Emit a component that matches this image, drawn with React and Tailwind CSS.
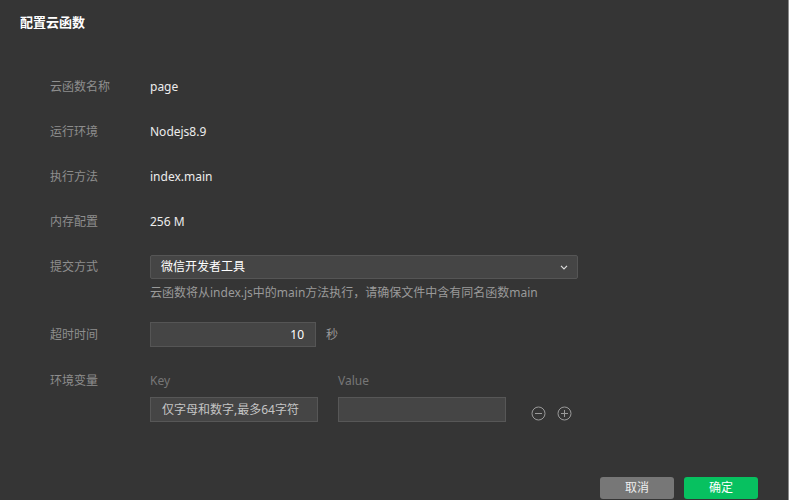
const font = "font-['Noto_Sans','Noto_Sans_CJK_SC',sans-serif]";

const Row = ({ label, children, className = "" }) => (
  <div className={`flex items-center ${className}`}>
    <div className="w-[150px] pl-[50px] text-[12px] text-[#8e8e8e] shrink-0">{label}</div>
    {children}
  </div>
);

const CircleIcon = ({ plus }) => (
  <svg width="15" height="15" viewBox="0 0 15 15" fill="none" stroke="#9a9a9a" strokeWidth="1">
    <circle cx="7.5" cy="7.5" r="6.5" />
    <line x1="4" y1="7.5" x2="11" y2="7.5" />
    {plus && <line x1="7.5" y1="4" x2="7.5" y2="11" />}
  </svg>
);

export default function App() {
  return (
    <div className={`w-[789px] h-[500px] bg-[#353535] border-r border-[#8a8a8a] flex flex-col ${font}`}>
      <div className="pl-[20px] pt-[13px] text-[13px] font-bold text-white leading-[18px]">配置云函数</div>

      <div className="mt-[44px] flex flex-col">
        {[
          ["云函数名称", "page"],
          ["运行环境", "Nodejs8.9"],
          ["执行方法", "index.main"],
          ["内存配置", "256 M"],
        ].map(([l, v]) => (
          <Row key={l} label={l} className="h-[24px] mb-[21px]">
            <span className="text-[12px] text-[#ececec]">{v}</span>
          </Row>
        ))}

        <Row label="提交方式" className="h-[24px]">
          <div className="w-[428px] h-[24px] bg-[#454545] border border-[#555] rounded-[2px] flex items-center justify-between pl-[10px] pr-[9px]">
            <span className="text-[12px] text-white">微信开发者工具</span>
            <svg width="8" height="5" viewBox="0 0 8 5" fill="none" stroke="#ddd" strokeWidth="1.2">
              <polyline points="1,0.8 4,3.8 7,0.8" />
            </svg>
          </div>
        </Row>
        <div className="pl-[150px] mt-[6px] text-[12px] text-[#9a9a9a] leading-[16px]">
          云函数将从index.js中的main方法执行，请确保文件中含有同名函数main
        </div>

        <Row label="超时时间" className="h-[25px] mt-[21px]">
          <div className="w-[166px] h-[25px] bg-[#454545] border border-[#555] flex items-center justify-end pr-[11px]">
            <span className="text-[12px] text-white">10</span>
          </div>
          <span className="ml-[10px] text-[12px] text-[#999]">秒</span>
        </Row>

        <div className="flex mt-[23px]">
          <div className="w-[150px] pl-[50px] text-[12px] text-[#8e8e8e] shrink-0 leading-[18px] pt-[2px]">环境变量</div>
          <div className="flex flex-col w-[168px]">
            <div className="text-[12px] text-[#777] leading-[18px] pt-[2px] h-[27px]">Key</div>
            <div className="h-[25px] bg-[#454545] border border-[#575757] flex items-center pl-[11px]">
              <span className="text-[12px] text-[#c4c4c4]">仅字母和数字,最多64字符</span>
            </div>
          </div>
          <div className="flex flex-col w-[168px] ml-[20px]">
            <div className="text-[12px] text-[#777] leading-[18px] pt-[2px] h-[27px]">Value</div>
            <div className="h-[25px] bg-[#454545] border border-[#575757]" />
          </div>
          <div className="flex items-end gap-[11px] ml-[25px] pb-[1px]">
            <CircleIcon />
            <CircleIcon plus />
          </div>
        </div>
      </div>

      <div className="mt-auto flex justify-end gap-[10px] pr-[30px] pb-[1px]">
        <button className="w-[74px] h-[22px] rounded-[3px] bg-[#777] text-[12px] text-[#eee]">取消</button>
        <button className="w-[74px] h-[22px] rounded-[3px] bg-[#07c160] text-[12px] text-white">确定</button>
      </div>
    </div>
  );
}
